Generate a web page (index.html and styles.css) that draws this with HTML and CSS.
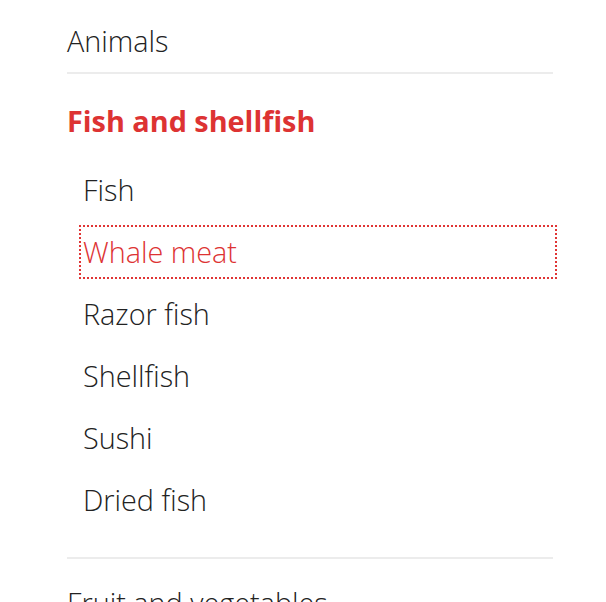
FILE: index.html
```html
<!DOCTYPE html>
<html>
<head>
<meta charset="utf-8">
<link rel="stylesheet" href="styles.css">
</head>
<body>
<nav class="menu">
  <div class="section">
    <a class="top-link" href="#">Animals</a>
  </div>
  <div class="section">
    <a class="heading" href="#">Fish and shellfish</a>
    <ul class="items">
      <li><a href="#">Fish</a></li>
      <li><a href="#" class="focused">Whale meat</a></li>
      <li><a href="#">Razor fish</a></li>
      <li><a href="#">Shellfish</a></li>
      <li><a href="#">Sushi</a></li>
      <li><a href="#">Dried fish</a></li>
    </ul>
  </div>
  <div class="section last">
    <a class="top-link" href="#">Fruit and vegetables</a>
  </div>
</nav>
</body>
</html>
```

FILE: styles.css
```css
html, body {
  margin: 0;
  padding: 0;
  background: #fff;
}
body {
  font-family: "Open Sans", "Liberation Sans", sans-serif;
  color: #222;
}
.menu {
  width: 486px;
  margin-left: 67px;
}
.menu a {
  text-decoration: none;
  color: inherit;
}
.section {
  border-bottom: 2px solid #ececec;
}
.section.last {
  border-bottom: none;
}
.top-link {
  display: block;
  font-size: 28.8px;
  font-weight: 300;
  line-height: 40px;
  padding: 21px 0 11px;
}
.section.last .top-link {
  padding-top: 24px;
}
.heading {
  display: block;
  font-size: 28.8px;
  font-weight: 700;
  color: #dd3333 !important;
  line-height: 40px;
  padding: 27px 0 18px;
}
.items {
  list-style: none;
  margin: 0;
  padding: 0 0 26px;
}
.items li {
  padding: 6px 0;
}
.items a {
  display: block;
  font-size: 28.8px;
  font-weight: 300;
  line-height: 50px;
  margin: 0 -2px 0 14px;
  padding: 0 0 0 2px;
}
.items a.focused {
  color: #dd3333;
  outline: 2px dotted #e03535;
}
```
